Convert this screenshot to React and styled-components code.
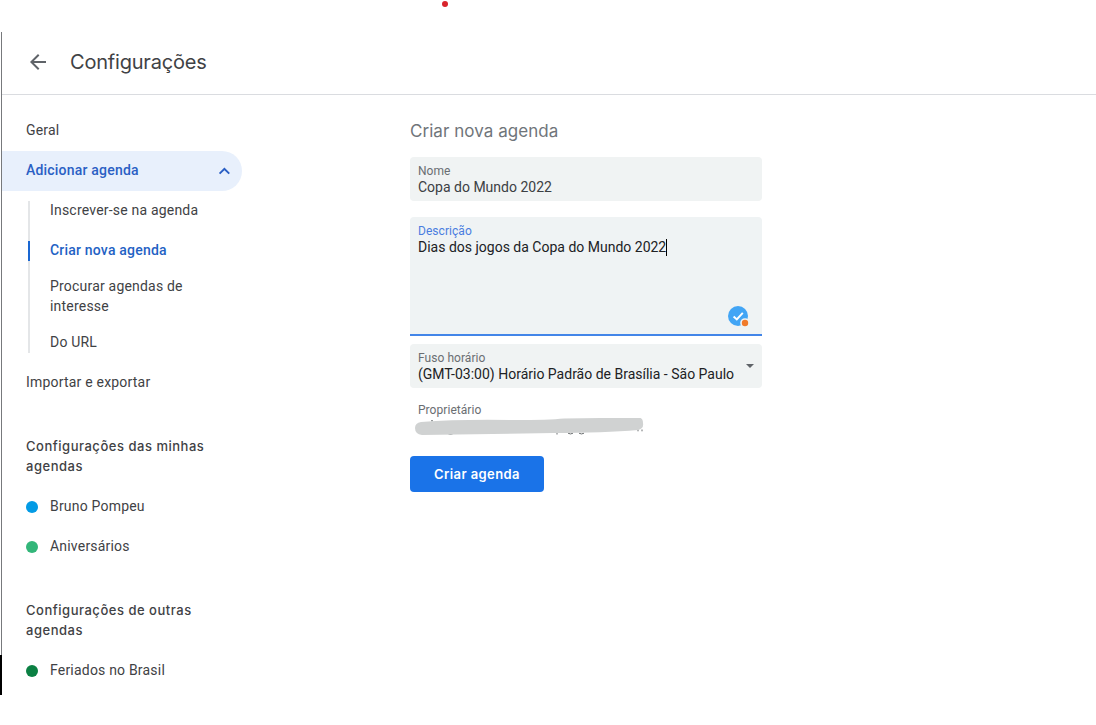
import React from "react";
import styled, { createGlobalStyle } from "styled-components";

const Global = createGlobalStyle`
  * { box-sizing: border-box; }
  body {
    margin: 0;
    background: #fff;
    color: #3f4245;
    font: 400 14px/20px Roboto, sans-serif;
    letter-spacing: 0.2px;
  }
`;

const Page = styled.div`
  display: flex;
  flex-direction: column;
  width: 1096px;
  height: 725px;
  overflow: hidden;
  background: #fff;
`;

const TopStrip = styled.div`
  flex: 0 0 32px;
  padding: 1px 0 0 442px;
`;

const RedDot = styled.div`
  width: 6px;
  height: 6px;
  border-radius: 50%;
  background: #d8232b;
`;

const Window = styled.div`
  display: flex;
  height: 663px;
`;

const Edge = styled.div`
  display: flex;
  flex-direction: column;
  flex: 0 0 2px;
`;

const EdgeLine = styled.div`
  width: 1px;
  height: 623px;
  margin-left: 1px;
  background: #77797c;
`;

const EdgeBlock = styled.div`
  width: 2px;
  height: 40px;
  background: #000;
`;

const Screen = styled.div`
  flex: 1;
  min-width: 0;
`;

const Header = styled.header`
  display: flex;
  align-items: center;
  height: 63px;
  padding: 0 0 2px 24px;
  border-bottom: 1px solid #dadce0;
`;

const Title = styled.h1`
  margin: 0 0 0 20px;
  font: 400 20px/28px Inter, sans-serif;
  letter-spacing: -0.2px;
`;

const Body = styled.div`
  display: flex;
`;

const Sidebar = styled.nav`
  width: 240px;
  padding-top: 16px;
`;

const NavItem = styled.div`
  display: flex;
  align-items: center;
  justify-content: space-between;
  height: 40px;
  padding: 0 8px 2px 24px;
  border-radius: 0 20px 20px 0;
  color: ${(p) => (p.$active ? "#2a5fc4" : "inherit")};
  background: ${(p) => (p.$active ? "#e8f0fc" : "transparent")};
  font-weight: ${(p) => (p.$active ? 500 : 400)};
`;

const SubList = styled.div`
  display: flex;
  flex-direction: column;
  gap: 16px;
  margin: 10px 0 10px 26px;
  border-left: 2px solid #e4e6e8;
`;

const SubItem = styled.div`
  margin: ${(p) => (p.$active ? "4px 0 0 -2px" : "0")};
  padding-left: 20px;
  border-left: ${(p) => (p.$active ? "2px solid #1a67d2" : "0")};
  color: ${(p) => (p.$active ? "#1f62c4" : "inherit")};
  font-weight: ${(p) => (p.$active ? 500 : 400)};
  width: ${(p) => (p.$narrow ? "180px" : "auto")};
`;

const SubText = styled.span`
  display: block;
  position: relative;
  top: -1px;
`;

const Group = styled.section`
  margin-top: ${(p) => p.$gap}px;
`;

const GroupTitle = styled.h2`
  width: 200px;
  margin: 0 0 11px 24px;
  font: 500 13px/20px Inter, sans-serif;
  letter-spacing: 0.52px;
`;

const CalendarRow = styled.div`
  display: flex;
  align-items: center;
  gap: 12px;
  height: 40px;
  padding-left: 24px;
`;

const Dot = styled.span`
  width: 12px;
  height: 12px;
  border-radius: 50%;
  background: ${(p) => p.$color};
`;

const CalendarName = styled.span`
  padding-bottom: 2px;
`;

const Form = styled.main`
  display: flex;
  flex-direction: column;
  width: 352px;
  margin-left: 168px;
  padding-top: 24px;
`;

const FormTitle = styled.h2`
  margin: 0 0 14px;
  color: #70757a;
  font: 400 17px/24px Inter, sans-serif;
  letter-spacing: 0.05px;
`;

const Field = styled.div`
  display: flex;
  align-items: flex-end;
  justify-content: space-between;
  height: 44px;
  padding: 6px 8px 5px;
  margin-bottom: ${(p) => p.$gap}px;
  border-radius: 4px;
  background: #f0f3f3;
`;

const AreaField = styled.div`
  display: flex;
  flex-direction: column;
  justify-content: space-between;
  height: 119px;
  padding: 6px 8px 6px;
  margin-bottom: 8px;
  border-radius: 4px 4px 0 0;
  border-bottom: 2px solid #4285e8;
  background: #eff3f4;
`;

const FieldText = styled.div`
  align-self: flex-start;
`;

const Label = styled.div`
  height: 16px;
  color: ${(p) => (p.$focus ? "#4a7de0" : "#6a6e72")};
  font-size: 12px;
  line-height: 17px;
  letter-spacing: 0.05px;
`;

const Value = styled.div`
  display: flex;
  align-items: center;
  height: 16px;
  line-height: 16px;
  letter-spacing: 0;
  white-space: nowrap;
  color: ${(p) => (p.$strong ? "#202124" : "#3c4043")};
`;

const Caret = styled.span`
  width: 1px;
  height: 17px;
  background: #000;
`;

const CheckerBadge = styled.svg`
  align-self: flex-end;
  margin-right: 5px;
`;

const DropArrow = styled.span`
  align-self: center;
  margin-bottom: 2px;
  border: 4px solid transparent;
  border-top-color: #5f6368;
  border-bottom: 0;
`;

const Redaction = styled.svg`
  display: block;
  margin-left: -4px;
`;

const Submit = styled.button`
  width: 134px;
  height: 36px;
  padding: 0;
  border: 0;
  border-radius: 4px;
  background: #1a73e8;
  color: #fff;
  font: 600 13px/20px Inter, sans-serif;
  letter-spacing: 0.4px;
`;

const Owner = styled.div`
  height: 60px;
  padding: 6px 8px 0;
`;

export default function App() {
  return (
    <>
      <Global />
      <Page>
        <TopStrip><RedDot /></TopStrip>
        <Window>
          <Edge><EdgeLine /><EdgeBlock /></Edge>
          <Screen>
            <Header>
              <svg width="24" height="24" viewBox="0 0 24 24" fill="#5f6368">
                <path d="M20 11H7.83l5.59-5.59L12 4l-8 8 8 8 1.41-1.41L7.83 13H20v-2z" />
              </svg>
              <Title>Configurações</Title>
            </Header>
            <Body>
              <Sidebar>
                <NavItem>Geral</NavItem>
                <NavItem $active>
                  Adicionar agenda
                  <svg width="20" height="20" viewBox="0 0 24 24" fill="#2a5fc4">
                    <path d="M12.5 8l-6.6 6.6 1.6 1.6 5-5 5 5 1.6-1.6z" transform="translate(0 1)" />
                  </svg>
                </NavItem>
                <SubList>
                  <SubItem><SubText>Inscrever-se na agenda</SubText></SubItem>
                  <SubItem $active><SubText>Criar nova agenda</SubText></SubItem>
                  <SubItem $narrow><SubText>Procurar agendas de interesse</SubText></SubItem>
                  <SubItem><SubText>Do URL</SubText></SubItem>
                </SubList>
                <NavItem>Importar e exportar</NavItem>
                <Group $gap={33}>
                  <GroupTitle>Configurações das minhas agendas</GroupTitle>
                  <CalendarRow><Dot $color="#039be5" /><CalendarName>Bruno Pompeu</CalendarName></CalendarRow>
                  <CalendarRow><Dot $color="#33b679" /><CalendarName>Aniversários</CalendarName></CalendarRow>
                </Group>
                <Group $gap={33}>
                  <GroupTitle>Configurações de outras agendas</GroupTitle>
                  <CalendarRow><Dot $color="#0b8043" /><CalendarName>Feriados no Brasil</CalendarName></CalendarRow>
                </Group>
              </Sidebar>
              <Form>
                <FormTitle>Criar nova agenda</FormTitle>
                <Field $gap={16}>
                  <FieldText>
                    <Label>Nome</Label>
                    <Value>Copa do Mundo 2022</Value>
                  </FieldText>
                </Field>
                <AreaField>
                  <FieldText>
                    <Label $focus>Descrição</Label>
                    <Value $strong>Dias dos jogos da Copa do Mundo 2022<Caret /></Value>
                  </FieldText>
                  <CheckerBadge width="22" height="22" viewBox="0 0 22 22">
                    <circle cx="11" cy="10" r="10" fill="#42a5f5" />
                    <path d="M6.6 10.4l3.2 3 6-6.6" fill="none" stroke="#fff" strokeWidth="2" />
                    <circle cx="18" cy="17" r="4.8" fill="#eff3f4" />
                    <circle cx="18" cy="17" r="3.2" fill="#f07b2b" />
                  </CheckerBadge>
                </AreaField>
                <Field $gap={8}>
                  <FieldText>
                    <Label>Fuso horário</Label>
                    <Value $strong>(GMT-03:00) Horário Padrão de Brasília - São Paulo</Value>
                  </FieldText>
                  <DropArrow />
                </Field>
                <Owner>
                  <Label>Proprietário</Label>
                  <Redaction width="232" height="20" viewBox="0 0 232 20">
                    <path d="M17 2.8h2M34 15.6q2.5 1.5 5 0M143 14v2.5M154 15.2q2.5 1.5 5 0M165 15.2q2.5 1.5 5 0M224 11.5v1.8M228 11.5v1.8" fill="none" stroke="#6a6e70" strokeWidth="1" />
                    <path d="M7 4Q45 1 100 2Q135 2 150 .5L224 -.5Q229 -.5 229 5Q230 11 224 12Q190 15 140 15L8 17Q1 16 1 10Q1 5 7 4Z" fill="#d0d2d2" />
                  </Redaction>
                </Owner>
                <Submit>Criar agenda</Submit>
              </Form>
            </Body>
          </Screen>
        </Window>
      </Page>
    </>
  );
}
